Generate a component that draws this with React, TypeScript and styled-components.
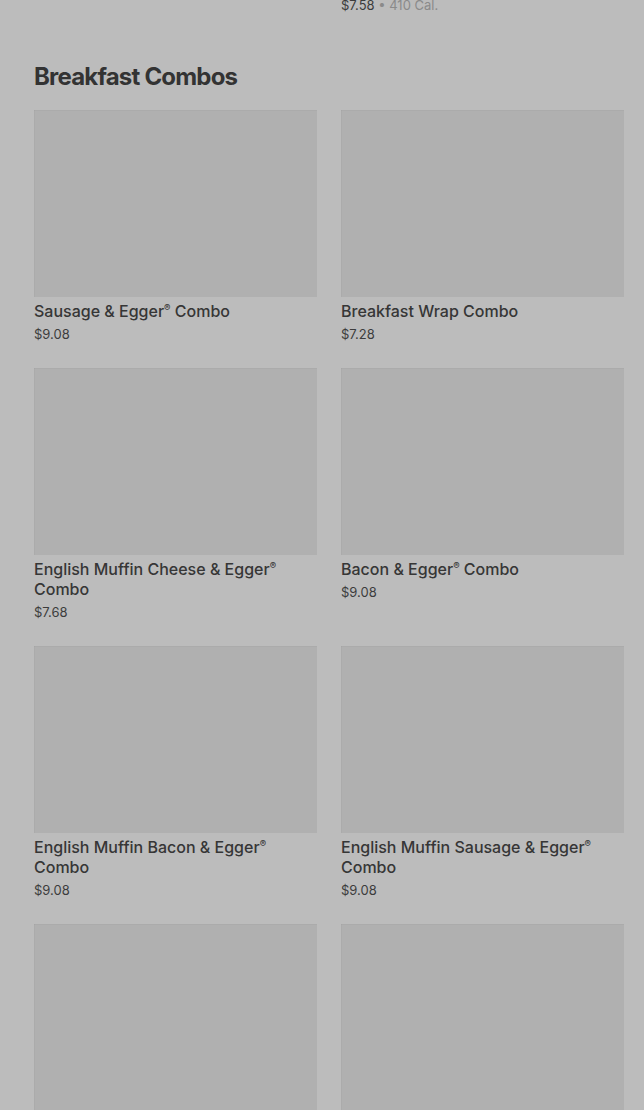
import React from "react";
import styled, { createGlobalStyle } from "styled-components";

const GlobalStyle = createGlobalStyle`
  html, body {
    margin: 0;
    padding: 0;
    background: #bcbcbc;
    font-family: Inter, "Noto Sans", "Liberation Sans", sans-serif;
    color: #343434;
  }
`;

const Page = styled.div`
  width: 644px;
  height: 1110px;
  overflow: hidden;
  box-sizing: border-box;
  padding: 0 20px 0 34px;
`;

const Grid = styled.div`
  display: grid;
  grid-template-columns: 283px 283px;
  column-gap: 24px;
  row-gap: 25px;
`;

const TailRow = styled(Grid)`
  margin-top: -8px;
`;

const SectionTitle = styled.h2`
  margin: 47px 0 17px;
  font-size: 24px;
  line-height: 32px;
  font-weight: 700;
  letter-spacing: -0.8px;
  color: #333;
`;

const Card = styled.div`
  display: flex;
  flex-direction: column;
`;

const Photo = styled.div`
  height: 187px;
  background: #b0b0b0;
  box-shadow: inset 0 1px 0 rgba(0, 0, 0, 0.025),
    inset 1px 0 0 rgba(0, 0, 0, 0.025);
`;

const Name = styled.div`
  margin-top: 4px;
  font-size: 16px;
  line-height: 20px;
  font-weight: 500;
  color: #363636;
`;

const Meta = styled.div`
  margin-top: 4px;
  font-size: 13px;
  line-height: 18px;
  color: #3c3c3c;
`;

const Cal = styled.span`
  color: #8a8a8a;
`;

type Item = { name?: string; price?: string };

const combos: Item[] = [
  { name: "Sausage & Egger® Combo", price: "$9.08" },
  { name: "Breakfast Wrap Combo", price: "$7.28" },
  { name: "English Muffin Cheese & Egger® Combo", price: "$7.68" },
  { name: "Bacon & Egger® Combo", price: "$9.08" },
  { name: "English Muffin Bacon & Egger® Combo", price: "$9.08" },
  { name: "English Muffin Sausage & Egger® Combo", price: "$9.08" },
  {},
  {},
];

const Sup = ({ text }: { text: string }) => {
  const parts = text.split("®");
  return (
    <>
      {parts.map((p, i) => (
        <React.Fragment key={i}>
          {p}
          {i < parts.length - 1 && <sup style={{ fontSize: "0.6em", lineHeight: 0 }}>®</sup>}
        </React.Fragment>
      ))}
    </>
  );
};

export default function App() {
  return (
    <Page>
      <GlobalStyle />
      <TailRow>
        <div />
        <Meta>
          $7.58 <Cal>• 410 Cal.</Cal>
        </Meta>
      </TailRow>
      <SectionTitle>Breakfast Combos</SectionTitle>
      <Grid>
        {combos.map((c, i) => (
          <Card key={i}>
            <Photo />
            {c.name && (
              <Name>
                <Sup text={c.name} />
              </Name>
            )}
            {c.price && <Meta>{c.price}</Meta>}
          </Card>
        ))}
      </Grid>
    </Page>
  );
}
